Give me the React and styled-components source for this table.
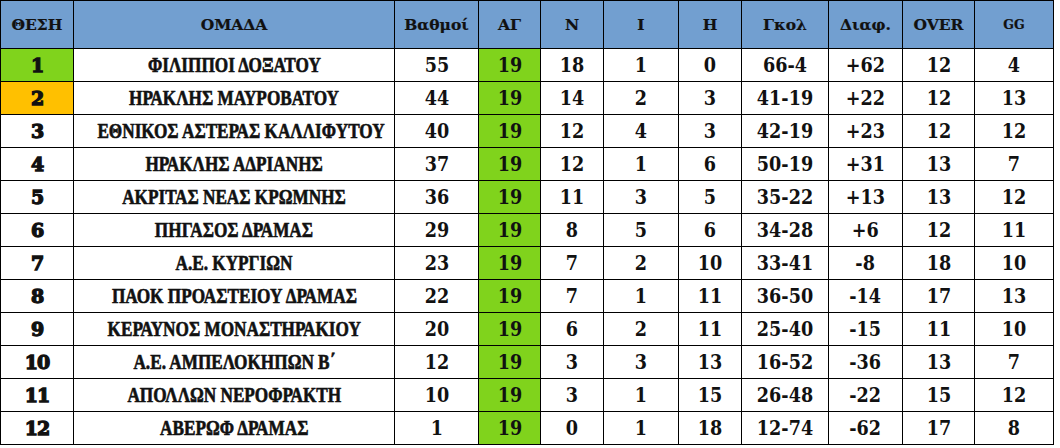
import styled, { createGlobalStyle } from "styled-components";

const Global = createGlobalStyle`
  body {
    margin: 0;
    background: #fff;
  }
`;

const cols = [73, 321, 84, 62, 63, 75, 63, 87, 74, 72, 79];

const headers = ["ΘΕΣΗ", "ΟΜΑΔΑ", "Βαθμοί", "ΑΓ", "Ν", "Ι", "Η", "Γκολ", "Διαφ.", "OVER", "GG"];

const rows = [
  [1, "ΦΙΛΙΠΠΟΙ ΔΟΞΑΤΟΥ", 55, 19, 18, 1, 0, "66-4", "+62", 12, 4],
  [2, "ΗΡΑΚΛΗΣ ΜΑΥΡΟΒΑΤΟΥ", 44, 19, 14, 2, 3, "41-19", "+22", 12, 13],
  [3, "ΕΘΝΙΚΟΣ ΑΣΤΕΡΑΣ ΚΑΛΛΙΦΥΤΟΥ", 40, 19, 12, 4, 3, "42-19", "+23", 12, 12],
  [4, "ΗΡΑΚΛΗΣ ΑΔΡΙΑΝΗΣ", 37, 19, 12, 1, 6, "50-19", "+31", 13, 7],
  [5, "ΑΚΡΙΤΑΣ ΝΕΑΣ ΚΡΩΜΝΗΣ", 36, 19, 11, 3, 5, "35-22", "+13", 13, 12],
  [6, "ΠΗΓΑΣΟΣ ΔΡΑΜΑΣ", 29, 19, 8, 5, 6, "34-28", "+6", 12, 11],
  [7, "Α.Ε. ΚΥΡΓΙΩΝ", 23, 19, 7, 2, 10, "33-41", "-8", 18, 10],
  [8, "ΠΑΟΚ ΠΡΟΑΣΤΕΙΟΥ ΔΡΑΜΑΣ", 22, 19, 7, 1, 11, "36-50", "-14", 17, 13],
  [9, "ΚΕΡΑΥΝΟΣ ΜΟΝΑΣΤΗΡΑΚΙΟΥ", 20, 19, 6, 2, 11, "25-40", "-15", 11, 10],
  [10, "Α.Ε. ΑΜΠΕΛΟΚΗΠΩΝ Β΄", 12, 19, 3, 3, 13, "16-52", "-36", 13, 7],
  [11, "ΑΠΟΛΛΩΝ ΝΕΡΟΦΡΑΚΤΗ", 10, 19, 3, 1, 15, "26-48", "-22", 15, 12],
  [12, "ΑΒΕΡΩΦ ΔΡΑΜΑΣ", 1, 19, 0, 1, 18, "12-74", "-62", 17, 8],
];

const Table = styled.table`
  width: 1053px;
  table-layout: fixed;
  border-collapse: collapse;
  border: 1.5px solid #000;
`;

const HeadCell = styled.th`
  height: 47px;
  padding: 0;
  background: #729fd0;
  border: 1px solid #000;
  color: #111;
  font-family: "DejaVu Serif", serif;
  font-weight: bold;
  font-size: ${(p) => (p.$small ? "12.5px" : "15.5px")};
  -webkit-text-stroke: 0.2px #111;
  text-align: center;
  vertical-align: middle;
`;

const Row = styled.tr`
  height: 33px;
`;

const Cell = styled.td`
  padding: 0;
  border: 1px solid #000;
  background: ${(p) => p.$bg || "#fff"};
  color: #111;
  text-align: center;
  vertical-align: middle;
  font-family: "DejaVu Serif", serif;
  font-weight: bold;
  font-size: 20px;
  line-height: 1;
  white-space: nowrap;
`;

/* the source picture is squeezed sideways, so the text is too */
const Squash = styled.span`
  display: inline-block;
  transform: scaleX(${(p) => p.$x || 0.88});
`;

const TeamCell = styled(Cell)`
  font-family: "Liberation Serif", serif;
  font-size: 20px;
  -webkit-text-stroke: 0.6px #111;
`;

const PosCell = styled(Cell)`
  font-size: 19px;
  font-weight: 900;
  -webkit-text-stroke: 1.3px #111;
  letter-spacing: -1px;
`;

const posColor = (pos) => {
  if (pos === 1) return "#80d31c";
  if (pos === 2) return "#ffc000";
  return undefined;
};

export default function App() {
  return (
    <>
      <Global />
      <Table>
        <colgroup>
          {cols.map((w, i) => (
            <col key={i} style={{ width: w }} />
          ))}
        </colgroup>
        <thead>
          <tr>
            {headers.map((h) => (
              <HeadCell key={h} $small={h === "GG"}>
                {h}
              </HeadCell>
            ))}
          </tr>
        </thead>
        <tbody>
          {rows.map(([pos, team, ...stats]) => (
            <Row key={pos}>
              <PosCell $bg={posColor(pos)}>{pos}</PosCell>
              <TeamCell>
                <Squash $x={0.86}>{team}</Squash>
              </TeamCell>
              {stats.map((v, i) => (
                <Cell key={i} $bg={i === 1 ? "#80d31c" : undefined}>
                  <Squash>{v}</Squash>
                </Cell>
              ))}
            </Row>
          ))}
        </tbody>
      </Table>
    </>
  );
}
